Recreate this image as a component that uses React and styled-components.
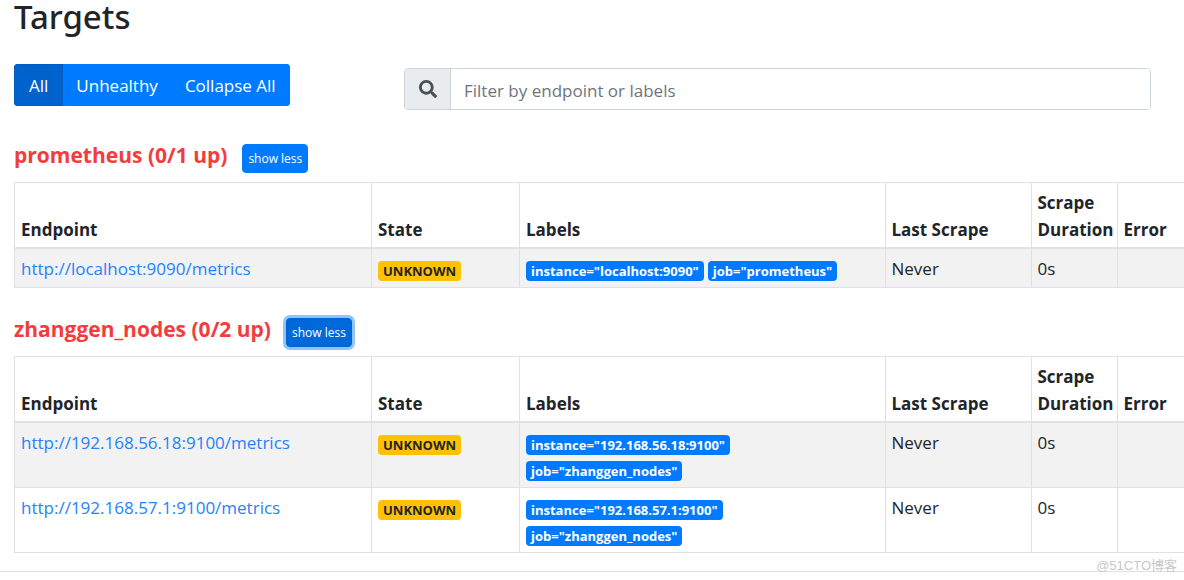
import { useState } from "react";
import styled, { createGlobalStyle } from "styled-components";
import { FaSearch } from "react-icons/fa";

const GlobalStyle = createGlobalStyle`
  *,
  *::before,
  *::after {
    box-sizing: border-box;
  }

  body {
    margin: 0;
    overflow: hidden;
    background: #fff;
    color: #212529;
    font-family: "Open Sans", "Noto Sans", "Noto Sans CJK SC", sans-serif;
    font-size: 17px;
    line-height: 27px;
  }

  button,
  input {
    font: inherit;
  }
`;

const Page = styled.main`
  position: relative;
  padding-left: 14px;
`;

const Title = styled.h1`
  margin: 0;
  padding-bottom: 30px;
  font-family: "Noto Sans", "Open Sans", sans-serif;
  font-size: 33px;
  font-weight: 500;
  line-height: 34px;
`;

const Toolbar = styled.div`
  display: grid;
  grid-template-columns: 1fr 2fr;
  align-items: start;
  padding-bottom: 4px;
`;

const ButtonGroup = styled.div`
  display: flex;
  justify-self: start;
  height: 42px;
  border-radius: 4px;
  overflow: hidden;
`;

const GroupButton = styled.button`
  padding: 0 14px;
  border: 1px solid ${({ $active }) => ($active ? "#005cbf" : "#007bff")};
  background: ${({ $active }) => ($active ? "#0062cc" : "#007bff")};
  color: #fff;
  cursor: pointer;

  & + & {
    padding: 0 13px 0 12px;
  }
`;

const SearchBox = styled.label`
  display: flex;
  height: 42px;
  margin: 4px 33px 0 0;
  border: 1px solid #ced4da;
  border-radius: 4px;
  overflow: hidden;
`;

const SearchIcon = styled.span`
  display: flex;
  align-items: center;
  padding: 0 13px 0 14px;
  border-right: 1px solid #ced4da;
  background: #e9ecef;
  color: #495057;
  font-size: 18px;
`;

const SearchInput = styled.input`
  flex: 1;
  min-width: 0;
  padding: 2px 13px 0;
  border: 0;
  outline: 0;
  color: #495057;

  &::placeholder {
    color: #6c757d;
    opacity: 1;
  }
`;

const Pool = styled.section`
  padding-top: 23px;
`;

const PoolHeader = styled.div`
  display: flex;
  align-items: center;
  gap: 15px;
  height: 45px;
  padding-bottom: 9px;
`;

const PoolTitle = styled.h3`
  margin: 0;
  color: #f43c3c;
  font-size: 21px;
  font-weight: 700;
  line-height: 27px;
`;

const ToggleButton = styled.button`
  height: 29px;
  margin-top: 7px;
  padding: 0 5px;
  border: 1px solid ${({ $focused }) => ($focused ? "#0062cc" : "#007bff")};
  border-radius: 4px;
  background: ${({ $focused }) => ($focused ? "#0069d9" : "#007bff")};
  box-shadow: ${({ $focused }) => ($focused ? "0 0 0 3px #8fc4ff" : "none")};
  color: #fff;
  font-size: 12px;
  line-height: 20px;
  cursor: pointer;
`;

const Table = styled.table`
  width: 100%;
  table-layout: fixed;
  border-collapse: collapse;
  border: 1px solid #dee2e6;
  border-right: 0;
`;

const HeadCell = styled.th`
  width: ${({ $width }) => ($width ? `${$width}px` : "auto")};
  padding: 6px 6px 4px;
  border: 1px solid #dee2e6;
  border-right-width: 0;
  border-bottom-width: 2px;
  font-weight: 700;
  text-align: left;
  vertical-align: bottom;
`;

const Row = styled.tr`
  &:nth-of-type(odd) {
    background: #f2f2f2;
  }
`;

const Cell = styled.td`
  padding: 6px 6px 5px;
  border: 1px solid #dee2e6;
  border-right-width: 0;
  vertical-align: top;
`;

const EndpointLink = styled.a`
  color: #2583fb;
  text-decoration: none;
`;

const StateBox = styled.div`
  display: flex;
  padding-top: 6px;
`;

const LabelList = styled.div`
  display: flex;
  flex-direction: ${({ $stacked }) => ($stacked ? "column" : "row")};
  align-items: flex-start;
  gap: ${({ $stacked }) => ($stacked ? "6px" : "4px")};
  padding: 6px 0 1px;
`;

const Badge = styled.span`
  padding: 0 5px;
  border-radius: 4px;
  background: ${({ $warning }) => ($warning ? "#ffc107" : "#007bff")};
  color: ${({ $warning }) => ($warning ? "#212529" : "#fff")};
  font-size: 13px;
  font-weight: 700;
  line-height: 20px;
  white-space: nowrap;
`;

const Footer = styled.footer`
  margin: 18px 0 0 -14px;
  border-top: 1px solid #dee2e6;
`;

const Watermark = styled.span`
  position: absolute;
  right: 7px;
  bottom: -6px;
  color: #c8c8c8;
  font-family: "Liberation Sans", "Noto Sans CJK SC", sans-serif;
  font-size: 13px;
  line-height: 24px;
`;

const columns = [
  { name: "Endpoint", width: 357 },
  { name: "State", width: 148 },
  { name: "Labels" },
  { name: "Last Scrape", width: 146 },
  { name: "Scrape Duration", width: 86 },
  { name: "Error", width: 67 },
];

const pools = [
  {
    name: "prometheus",
    targets: [
      {
        url: "http://localhost:9090/metrics",
        labels: ['instance="localhost:9090"', 'job="prometheus"'],
      },
    ],
  },
  {
    name: "zhanggen_nodes",
    focused: true,
    targets: [
      {
        url: "http://192.168.56.18:9100/metrics",
        labels: ['instance="192.168.56.18:9100"', 'job="zhanggen_nodes"'],
        stacked: true,
      },
      {
        url: "http://192.168.57.1:9100/metrics",
        labels: ['instance="192.168.57.1:9100"', 'job="zhanggen_nodes"'],
        stacked: true,
      },
    ],
  },
];

const TargetTable = ({ targets }) => (
  <Table>
    <thead>
      <tr>
        {columns.map(({ name, width }) => (
          <HeadCell key={name} $width={width}>
            {name}
          </HeadCell>
        ))}
      </tr>
    </thead>
    <tbody>
      {targets.map(({ url, labels, stacked }) => (
        <Row key={url}>
          <Cell>
            <EndpointLink href={url}>{url}</EndpointLink>
          </Cell>
          <Cell>
            <StateBox>
              <Badge $warning>UNKNOWN</Badge>
            </StateBox>
          </Cell>
          <Cell>
            <LabelList $stacked={stacked}>
              {labels.map((label) => (
                <Badge key={label}>{label}</Badge>
              ))}
            </LabelList>
          </Cell>
          <Cell>Never</Cell>
          <Cell>0s</Cell>
          <Cell />
        </Row>
      ))}
    </tbody>
  </Table>
);

const TargetPool = ({ name, targets, focused }) => {
  const [expanded, setExpanded] = useState(true);

  return (
    <Pool>
      <PoolHeader>
        <PoolTitle>
          {name} (0/{targets.length} up)
        </PoolTitle>
        <ToggleButton
          type="button"
          $focused={focused}
          onClick={() => setExpanded(!expanded)}
        >
          show {expanded ? "less" : "more"}
        </ToggleButton>
      </PoolHeader>
      {expanded && <TargetTable targets={targets} />}
    </Pool>
  );
};

const App = () => (
  <>
    <GlobalStyle />
    <Page>
      <Title>Targets</Title>
      <Toolbar>
        <ButtonGroup>
          <GroupButton type="button" $active>
            All
          </GroupButton>
          <GroupButton type="button">Unhealthy</GroupButton>
          <GroupButton type="button">Collapse All</GroupButton>
        </ButtonGroup>
        <SearchBox>
          <SearchIcon>
            <FaSearch />
          </SearchIcon>
          <SearchInput
            type="text"
            aria-label="Filter by endpoint or labels"
            placeholder="Filter by endpoint or labels"
          />
        </SearchBox>
      </Toolbar>
      {pools.map((pool) => (
        <TargetPool key={pool.name} {...pool} />
      ))}
      <Footer />
      <Watermark>@51CTO博客</Watermark>
    </Page>
  </>
);

export default App;
